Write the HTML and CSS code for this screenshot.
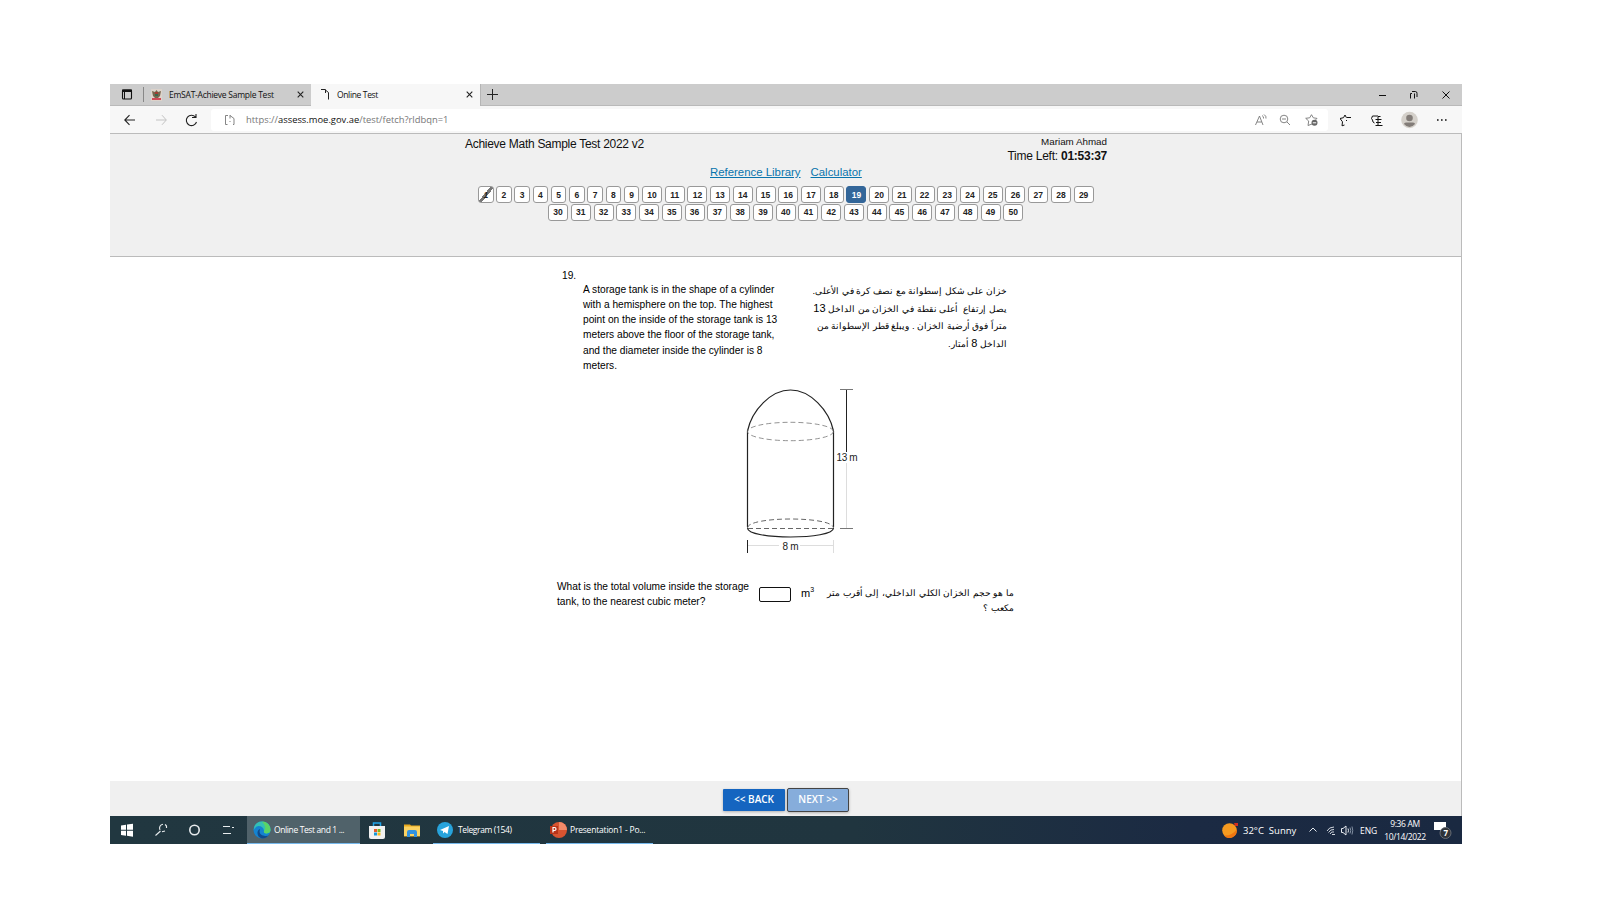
FILE: index.html
```html
<!DOCTYPE html>
<html lang="en">
<head>
<meta charset="utf-8">
<title>Online Test</title>
<link rel="stylesheet" href="styles.css">
</head>
<body>
<div class="screen">
  <div class="tabs">
    <div class="tab-menu"><svg width="12" height="11" viewBox="0 0 12 11"><rect x="1.500" y="1" width="9" height="9" rx="1" fill="none" stroke="#111" stroke-width="1.100"/><path d="M1 .5h10v2.500H1z" fill="#111"/><path d="M3.500 2v8" stroke="#111"/></svg></div>
    <div class="tab tab-one">
      <svg width="11" height="12" viewBox="0 0 11 12"><rect y="0" width="11" height="12" fill="#ddd3cb"/><path d="M1 2l3 1 1.500-2 1.500 2 3-1-1 5-2 2H4L2 7z" fill="#77664c"/><path d="M4 3h3v4H4z" fill="#a33b32"/><path d="M4 5h3v2H4z" fill="#39684e"/><path d="M1 9h9v2H1z" fill="#d04a57"/></svg>
      <span class="tab-title t1">EmSAT-Achieve Sample Test</span>
      <svg class="x" width="7" height="7" viewBox="0 0 7 7"><path d="M.7.7l5.600 5.600M6.300.7L.7 6.300" stroke="#222" stroke-width="1.1"/></svg>
    </div>
    <div class="tab tab-two">
      <svg width="9" height="11" viewBox="0 0 9 11"><path d="M0 .5h4.500M4.500.5v3.500M5 1.500l2.500 2v7" fill="none" stroke="#222"/></svg>
      <span class="tab-title t2">Online Test</span>
      <svg class="x" width="7" height="7" viewBox="0 0 7 7"><path d="M.7.7l5.600 5.600M6.300.7L.7 6.300" stroke="#222" stroke-width="1.1"/></svg>
    </div>
    <svg class="plus" width="11" height="11" viewBox="0 0 11 11"><path d="M0 5.500h11M5.500 0v11" stroke="#222"/></svg>
    <div class="win">
      <svg width="7" height="9" viewBox="0 0 7 9"><path d="M0 5.500h7" stroke="#111"/></svg>
      <svg width="8" height="8" viewBox="0 0 8 8"><path d="M.5 7.500V2.500H2M4.500 2.500v5M2 .5h3.500q1.500 0 1.500 2v3.500" fill="none" stroke="#111"/></svg>
      <svg width="8" height="8" viewBox="0 0 8 8"><path d="M.5.5l7 7M7.500.5l-7 7" stroke="#111"/></svg>
    </div>
  </div>
  <div class="toolbar">
    <svg class="nav" width="72" height="12" viewBox="0 0 72 12"><path d="M11 6H.8M5.500 1.200L.8 6l4.700 4.800" fill="none" stroke="#222" stroke-width="1.100"/><path d="M32 6h10.200M38 1.200L42.300 6 38 10.800" fill="none" stroke="#c3c3c3"/><path d="M71.500 3A5.200 5.200 0 1 0 72.500 8M68 3.500h4V0" fill="none" stroke="#222" stroke-width="1.100"/></svg>
    <div class="address">
      <svg width="10" height="10" viewBox="0 0 10 10"><path d="M3 .5H.5v9H2.500M5 .5l4 3v6H8M5 0v3.500M4.500 6.500h1" fill="none" stroke="#777" stroke-width=".9"/></svg>
      <span class="url">https://<b>assess.moe.gov.ae</b>/test/fetch?rldbqn=1</span>
      <svg class="addr-icons" width="63" height="12" viewBox="0 0 63 12"><g fill="none" stroke="#777" stroke-width=".9"><path d="M.5 11L4.500 2l3.500 9M2 8h4.700M7 1.500q2 1 1.500 3M9 .5q2.500 1.500 2 4"/><circle cx="29" cy="5" r="3.800"/><path d="M27 5h4M32 8l3 3"/><path d="M57 10l-4 1.500.7-4.500-3-2.700 4-.5L56.500.7l1.800 3.100 3.700.6-1.500 1.500"/></g><circle cx="59.500" cy="8.800" r="3" fill="#666"/><path d="M57.800 8.800h3.400" stroke="#fff"/></svg>
    </div>
    <svg class="tools" width="110" height="18" viewBox="0 0 110 18"><g fill="none" stroke="#111"><path d="M4.500 14l-2.500.8.500-4L0 7.500l3.500-.8L5 4l1.500 2.800M7 6.500h4M7 9l-1 1"/><path d="M34.500 12q-2-.5-2-3l-1-1.500 1-2.500H38M38 6v9M35.500 8.500h6M35.500 14.500h7M38 5.500h2.500M36 11.500h5"/></g><circle cx="69.500" cy="9" r="8.300" fill="#d4d0ca"/><circle cx="69.500" cy="7" r="3.300" fill="#827c78"/><path d="M64 13q0-1.500 2-1.500h7q2 0 2 1.500-2.500 3-5.500 3t-5.500-3z" fill="#827c78"/><path d="M97 9h1.600M101 9h1.600M105 9h1.600" stroke="#111" stroke-width="1.400"/></svg>
  </div>
  <div class="page">
    <div class="header">
      <div class="headline">
        <div class="title">Achieve Math Sample Test 2022 v2</div>
        <div class="user"><div class="name">Mariam Ahmad</div><div class="time">Time Left: <b>01:53:37</b></div></div>
      </div>
      <div class="links"><a>Reference Library</a><a class="calc">Calculator</a></div>
      <div class="nums"><span class="s done">1</span><span class="s">2</span><span class="s">3</span><span class="s">4</span><span class="s">5</span><span class="s">6</span><span class="s">7</span><span class="s">8</span><span class="s">9</span><span>10</span><span>11</span><span>12</span><span>13</span><span>14</span><span>15</span><span>16</span><span>17</span><span>18</span><span class="current">19</span><span>20</span><span>21</span><span>22</span><span>23</span><span>24</span><span>25</span><span>26</span><span>27</span><span>28</span><span>29</span></div>
      <div class="nums"><span>30</span><span>31</span><span>32</span><span>33</span><span>34</span><span>35</span><span>36</span><span>37</span><span>38</span><span>39</span><span>40</span><span>41</span><span>42</span><span>43</span><span>44</span><span>45</span><span>46</span><span>47</span><span>48</span><span>49</span><span>50</span></div>
    </div>
    <div class="content">
      <div class="qno">19.</div>
      <div class="stem">
        <div class="en">A storage tank is in the shape of a cylinder<br>with a hemisphere on the top. The highest<br>point on the inside of the storage tank is 13<br>meters above the floor of the storage tank,<br>and the diameter inside the cylinder is 8<br>meters.</div>
        <div class="ar" lang="ar" dir="rtl">خزان على شكل إسطوانة مع نصف كرة في الأعلى.<br>يصل إرتفاع &nbsp;أعلى نقطة في الخزان من الداخل <span class="big">13</span><br>متراً فوق أرضية الخزان . ويبلغ قطر الإسطوانة من<br>الداخل <span class="big">8</span> أمتار.</div>
      </div>
      <svg class="figure" width="120" height="170" viewBox="0 0 120 170">
        <g fill="none" stroke="#222">
          <path d="M7.500 142V46C12 25 31 5 50.500 5S89 25 93.500 46v96" stroke-width="1.200"/>
          <path d="M7.500 143C7.500 155 93.500 155 93.500 143" stroke-width="1.200"/>
          <ellipse cx="50.500" cy="46.500" rx="43" ry="9.200" stroke="#777" stroke-width=".8" stroke-dasharray="5 3"/>
          <path d="M7.500 143C7.500 131 93.500 131 93.500 143" stroke="#555" stroke-width=".9" stroke-dasharray="5 3"/>
          <path d="M8 143.500h85" stroke="#555" stroke-width=".9" stroke-dasharray="5 3"/>
          <path d="M106.500 4.500V67"/>
          <path d="M100 4.500h13M100 143.500h13" stroke="#777"/>
          <path d="M106.500 78v65M8 160.500h31M60 160.500h33M93.500 155v13" stroke="#ddd"/>
          <path d="M7.500 155v13"/>
        </g>
        <text class="dim" x="96.500" y="76" textLength="21">13 m</text>
        <text class="dim" x="42.500" y="164.500" textLength="16">8 m</text>
      </svg>
      <div class="ask">
        <div class="ask-en">What is the total volume inside the storage<br>tank, to the nearest cubic meter?</div>
        <div class="box"></div>
        <div class="unit">m<sup>3</sup></div>
        <div class="ask-ar" lang="ar" dir="rtl">ما هو حجم الخزان الكلي الداخلي، إلى أقرب متر<br>مكعب ؟</div>
      </div>
    </div>
    <div class="footer"><div class="btn back">&lt;&lt; BACK</div><div class="btn next">NEXT &gt;&gt;</div></div>
  </div>
  <div class="taskbar">
    <svg class="start" width="114" height="14" viewBox="0 0 114 14"><path d="M0 2.500l5-.8v5H0zM6 1.500l6-.8v6H6zM0 7.700h5v5l-5-.7zM6 7.700h6v6l-6-.9z" fill="#fff"/><g fill="none" stroke="#e8ecee" stroke-width="1.100"><path d="M34.500 12.500l5-4.500M39 7A4 4 0 0 1 42 1.200M44 1.500q2 1 1.500 3.500M44 8l-3 .8"/><circle cx="73.500" cy="7" r="4.700" stroke-width="1.600"/><path d="M102 3.500h7M102 10.500h8M111 4.500h2" stroke-width="1.200"/></g></svg>
    <div class="task active">
      <svg width="18" height="18" viewBox="0 0 18 18"><circle cx="9" cy="9" r="8.500" fill="#1583d0"/><path d="M1.500 5A8.500 8.500 0 0 1 17.500 9q0 3-4 3.500-3.500 0-2.500-3Q10 5 5.500 5 3 5 .7 9z" fill="#34c1b4"/><path d="M9 .5A8.500 8.500 0 0 1 17.500 9q0 3-4 3.500-3 0-2.500-2.500 3-4-2-9.500z" fill="#5bd465"/><path d="M7 8q-2 6 5 7 3 .2 4-1-3 3.500-7 3.500Q4 16 4.500 11 5 8.500 7 8z" fill="#114a8b"/></svg>
      <span>Online Test and 1 ...</span>
    </div>
    <svg class="store" width="16" height="17" viewBox="0 0 16 17"><path d="M4.500 5V1h7v4" fill="none" stroke="#20a4e8" stroke-width="1.500"/><path d="M0 4h16v11q0 2-2 2H2q-2 0-2-2z" fill="#f0f1f1"/><path d="M5 7h3v3H5z" fill="#e75a28"/><path d="M8.500 7h3v3h-3z" fill="#7ab51d"/><path d="M5 10.500h3v3H5z" fill="#1597d8"/><path d="M8.500 10.500h3v3h-3z" fill="#f7b916"/></svg>
    <svg class="folder" width="16" height="13" viewBox="0 0 16 13"><path d="M0 .5h6l1 1h9v11H0z" fill="#e9a91d"/><path d="M0 2.500h16v9.500H0z" fill="#fbd262"/><path d="M3 13V8q0-2 2-2h6q2 0 2 2v5h-3v-3H6v3z" fill="#3292df"/></svg>
    <div class="task telegram">
      <svg width="16" height="16" viewBox="0 0 16 16"><circle cx="8" cy="8" r="8" fill="#27a3dc"/><path d="M3 8l9-4-1.500 8-3-2-1.500 1.500V9z" fill="#fff"/></svg>
      <span>Telegram (154)</span>
    </div>
    <div class="task ppt">
      <svg width="17" height="16" viewBox="0 0 17 16"><circle cx="9" cy="8" r="8" fill="#d85430"/><path d="M9 0a8 8 0 0 1 8 8H9z" fill="#f28a69"/><path d="M0 4h8v8H0z" fill="#b93419"/><path d="M3 10.500v-5h1.500a1.500 1.500 0 0 1 0 3H3" fill="none" stroke="#fff" stroke-width="1.200"/></svg>
      <span>Presentation1 - Po...</span>
    </div>
    <div class="tray">
      <svg class="sun" width="17" height="16" viewBox="0 0 17 16"><circle cx="7.500" cy="8.500" r="7.300" fill="#f59a20"/><path d="M2 13.500a7.300 7.300 0 0 0 12.700-6Q10 14 2 13.500z" fill="#ef7611"/><path d="M12 1h4v3h-3z" fill="#d3301d"/></svg>
      <span class="temp">32°C&nbsp; Sunny</span>
      <svg class="sys" width="45" height="12" viewBox="0 0 45 12"><g fill="none" stroke="#e5e9ee"><path d="M.5 7.500L4 4l3.500 3.500"/><path d="M18 7q2-4 7-4M19.500 8.500q2-3.500 5.500-3M21 10q1.500-3 4-2M23 10.500h3" stroke-width=".9"/><path d="M32.500 4.500v4h1.500l3 2.500V2L34 4.500zM39 4.500q1 2 0 4"/><path d="M41 3.500q1.500 3 0 6M43 2.500q1.500 4 0 8" stroke="#8290a2"/></g></svg>
      <span class="eng">ENG</span>
      <div class="clock"><span>9:36 AM</span><span>10/14/2022</span></div>
      <svg class="note" width="18" height="18" viewBox="0 0 18 18"><path d="M0 1h12v8H8.500L6 11.500V9H0z" fill="#fff"/><circle cx="11.500" cy="12" r="5.500" fill="#2f3338" stroke="#656b75"/><text class="badge" x="9.500" y="15">7</text></svg>
    </div>
  </div>
</div>
</body>
</html>
```
FILE: styles.css
```css
* { box-sizing: border-box; }
body { margin: 0; width: 1600px; height: 900px; overflow: hidden; background: #fff; font-family: "Liberation Sans", Arial, sans-serif; color: #111; }
svg { display: block; flex: none; }
.screen { width: 1352px; height: 760px; margin: 84px 0 0 110px; display: flex; flex-direction: column; white-space: nowrap; }

/* browser window */
.tabs { height: 22px; flex: none; background: #ccc; border-bottom: 1px solid #b9b9b9; display: flex; align-items: center; font: 8.5px "Open Sans", sans-serif; }
.tab-menu { width: 34px; height: 15px; padding: 2px 0 0 11px; border-right: 1px solid #888; }
.tab { height: 22px; display: flex; align-items: center; }
.tab-one { width: 167px; padding-left: 7px; }
.tab-two { width: 170px; padding-left: 10px; background: #f7f7f7; border-right: 1px solid #b5b5b5; }
.tab-title { margin-left: 7px; flex: 1; }
.t1 { letter-spacing: -.25px; }
.t2 { letter-spacing: -.35px; }
.x { margin-right: 7px; }
.plus { margin-left: 6px; }
.win { margin: 0 12px 0 auto; display: flex; align-items: center; gap: 24px; }
.toolbar { height: 28px; flex: none; background: #f7f7f7; border-bottom: 1px solid #bbb; display: flex; align-items: center; }
.nav { margin: 0 19px 0 14px; overflow: visible; }
.address { width: 1117px; height: 22px; border-radius: 3px; background: #fff; display: flex; align-items: center; padding: 0 10px 0 14px; margin-left: -4px; }
.url { margin-left: 11px; flex: 1; font: 9.4px "Open Sans", sans-serif; color: #777; }
.url b { color: #111; font-weight: 400; }
.tools { margin-left: 12px; }

/* test page */
.page { height: 682px; flex: none; display: flex; flex-direction: column; border-right: 1px solid #bbb; }
.header { height: 123px; flex: none; background: #f0f0f0; border-bottom: 1px solid #bbb; }
.headline { width: 642px; margin-left: 355px; height: 31px; display: flex; justify-content: space-between; }
.title { font-size: 12px; letter-spacing: -.28px; line-height: 14px; padding-top: 3px; }
.user { text-align: right; }
.name { font-size: 9.8px; line-height: 12px; padding-top: 2px; }
.time { font-size: 12px; letter-spacing: -.25px; line-height: 14px; margin-top: 1px; }
.links { padding-left: 600px; height: 21px; font-size: 11.4px; line-height: 15px; color: #0874ad; display: flex; gap: 10px; }
.links a { text-decoration: underline; }
.nums { display: flex; gap: 2.720px; height: 18px; padding-left: 368px; }
.nums + .nums { gap: 2.780px; padding-left: 438px; }
.nums span { width: 20px; height: 17px; border: 1px solid #999; border-radius: 3px; background: #fff; font-weight: 700; font-size: 8.5px; line-height: 16px; text-align: center; color: #222; }
.nums + .nums span { line-height: 15px; }
.nums .s { width: 15.500px; }
.nums .done { background: linear-gradient(130deg, transparent 43%, #777 43%, #777 58%, transparent 58%), #fff; font-style: italic; }
.nums .current { background: #336699; border-color: #336699; color: #fff; }
.content { flex: 1; min-height: 0; display: flex; flex-direction: column; font-size: 10.2px; color: #000; }
.qno { padding: 12px 0 0 452px; height: 25px; line-height: 14px; }
.stem { display: flex; height: 103px; padding-left: 473px; }
.en { width: 200px; line-height: 15.150px; }
.ar { width: 224px; line-height: 17.500px; font-size: 9.4px; }
.big { font-size: 11px; line-height: 0; }
.figure { margin-left: 630px; }
.dim { font-size: 10px; fill: #222; }
.ask { display: flex; padding: 24px 0 0 447px; }
.ask-en { width: 202px; line-height: 15px; }
.box { width: 32px; height: 15px; border: 1.500px solid #111; border-radius: 2px; margin-top: 8px; }
.unit { width: 32px; padding-left: 10px; font-size: 11px; line-height: 28px; }
.unit sup { font-size: 7px; line-height: 0; }
.ask-ar { width: 191px; font-size: 9.4px; line-height: 14.500px; padding-top: 7px; }
.footer { height: 35px; flex: none; background: #f0f0f0; padding: 8px 0 0 613px; display: flex; gap: 2px; }
.btn { width: 62px; height: 22px; background: #1565c0; color: #fff; font: 600 10px/21px "Open Sans", sans-serif; text-align: center; box-shadow: 0 1px 3px #0004; border-radius: 1px; }
.next { height: 24px; margin-top: -1px; background: #86addb; border: 1px solid #444; border-radius: 2px; }

/* desktop taskbar */
.taskbar { height: 28px; flex: none; background: linear-gradient(90deg, #213740, #20353f 55%, #1b2a43 80%, #1a2941); color: #fff; display: flex; align-items: center; font: 8.500px "Open Sans", sans-serif; }
.start { margin: 0 12px 0 11px; }
.task { height: 28px; display: flex; align-items: center; border-bottom: 1px solid #76b9ed; }
.task span { letter-spacing: -.38px; }
.active { width: 113px; background: #50626a; padding-left: 6px; }
.active span { margin-left: 3px; }
.store { margin-left: 9px; }
.folder { margin: 0 13px 0 19px; }
.telegram { width: 107px; padding-left: 4px; margin-right: 6px; }
.telegram span { margin-left: 5px; }
.ppt { width: 107px; padding-left: 4px; }
.ppt span { margin-left: 3px; letter-spacing: -.2px; }
.tray { margin-left: auto; display: flex; align-items: center; }
.temp { width: 66px; margin-left: 4px; font-size: 9.500px; }
.eng { width: 17px; margin-left: 6px; }
.clock { width: 46px; margin-left: 5px; display: flex; flex-direction: column; align-items: center; line-height: 13px; letter-spacing: -.35px; }
.note { margin: 0 10px 0 6px; }
.badge { font: 700 8px "Open Sans", sans-serif; fill: #fff; }
```
